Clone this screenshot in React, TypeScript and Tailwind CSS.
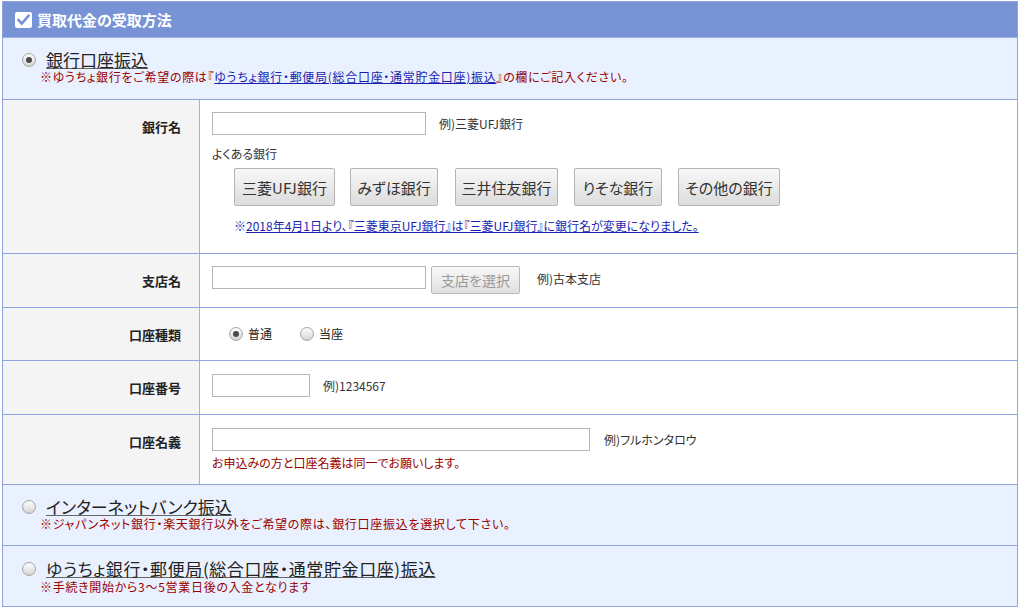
import React from "react";

const FONT = { fontFamily: '"Noto Sans CJK JP", "Noto Sans", sans-serif', fontFeatureSettings: "'palt'" } as React.CSSProperties;

function Radio({ checked }: { checked?: boolean }) {
  return (
    <span className="relative inline-flex w-[14px] h-[14px] shrink-0 rounded-full border border-[#a9a9a9] bg-gradient-to-b from-[#ffffff] to-[#d6d6d6] items-center justify-center shadow-[inset_0_0_1px_rgba(0,0,0,0.15)]">
      {checked && <span className="w-[6px] h-[6px] rounded-full bg-[#4a4a4a]" />}
    </span>
  );
}

function BankButton({ label, cls }: { label: string; cls: string }) {
  return (
    <button className={`${cls} h-[38px] rounded-[2px] border border-[#b4b4b4] bg-gradient-to-b from-[#f8f8f8] to-[#dcdcdc] text-[15px] text-[#333] leading-none`}>
      {label}
    </button>
  );
}

function Label({ text }: { text: string }) {
  return (
    <div className="w-[197px] shrink-0 bg-[#f4f4f4] border-r border-[#9fb2e6] pt-[19px] pr-[18px] text-right text-[13px] leading-[16px] font-bold text-[#222]">
      {text}
    </div>
  );
}

function Title({ text, wide }: { text: string; wide?: boolean }) {
  return (
    <span
      className={`ml-[10px] text-[17px] leading-[18px] text-[#222] underline decoration-[#666] underline-offset-[1px] ${wide ? "tracking-[0.6px]" : ""}`}
    >
      {text}
    </span>
  );
}

export default function App() {
  return (
    <div className="w-[1024px] h-[611px] bg-white pt-[1px]" style={FONT}>
      <div className="ml-[2px] w-[1016px] border border-[#8ea3df] border-b-0">
        {/* Header */}
        <div className="h-[36px] bg-[#7893d5] border-b border-[#9db0e8] flex items-center pl-[12px]">
          <span className="w-[17px] h-[16px] bg-white rounded-[2px] flex items-center justify-center">
            <svg width="13" height="12" viewBox="0 0 13 12">
              <path d="M1.5 6.2 L4.8 9.5 L11.5 1.8" fill="none" stroke="#7893d5" strokeWidth="2.6" strokeLinecap="square" />
            </svg>
          </span>
          <span className="ml-[5px] text-[15px] font-bold text-white leading-none">買取代金の受取方法</span>
        </div>

        {/* Section 1 */}
        <div className="bg-[#eaf1fe] border-b border-[#8ea3df] pt-[12px] pb-[15px]">
          <div className="flex items-center pl-[19px] h-[20px]">
            <Radio checked />
            <Title text="銀行口座振込" />
          </div>
          <div className="pl-[37px] text-[12px] leading-[14px] tracking-[0.7px] text-[#990000]">
            ※ゆうちょ銀行をご希望の際は『
            <span className="text-[#1b1fb0] underline">ゆうちょ銀行・郵便局(総合口座・通常貯金口座)振込</span>
            』の欄にご記入ください。
          </div>
        </div>

        {/* Row 1 */}
        <div className="flex border-b border-[#8ea3df]">
          <Label text="銀行名" />
          <div className="flex-1 pl-[12px] pt-[12px] pb-[20px]">
            <div className="flex items-center">
              <input className="w-[214px] h-[23px] border border-[#b5b5b5] bg-white outline-none" />
              <span className="ml-[13px] text-[12px] text-[#333]">例)三菱UFJ銀行</span>
            </div>
            <div className="mt-[12px] text-[12px] leading-[14px] text-[#333]">よくある銀行</div>
            <div className="mt-[7px] ml-[22px] flex">
              <BankButton label="三菱UFJ銀行" cls="w-[101px]" />
              <BankButton label="みずほ銀行" cls="ml-[15px] w-[88px]" />
              <BankButton label="三井住友銀行" cls="ml-[17px] w-[103px]" />
              <BankButton label="りそな銀行" cls="ml-[16px] w-[88px]" />
              <BankButton label="その他の銀行" cls="ml-[16px] w-[102px]" />
            </div>
            <div className="mt-[13px] ml-[22px] text-[12px] leading-[14px] text-[#1b1fb0]">
              ※<span className="underline">2018年4月1日より、『三菱東京UFJ銀行』は『三菱UFJ銀行』に銀行名が変更になりました。</span>
            </div>
          </div>
        </div>

        {/* Row 2 */}
        <div className="flex border-b border-[#8ea3df]">
          <Label text="支店名" />
          <div className="flex-1 pl-[12px] pt-[12px] pb-[13px] flex items-start">
            <input className="w-[214px] h-[23px] border border-[#b5b5b5] bg-white outline-none" />
            <button className="ml-[5px] w-[89px] h-[28px] rounded-[2px] border border-[#b8b8b8] bg-gradient-to-b from-[#f8f8f8] to-[#e0e0e0] text-[14px] text-[#999] leading-none">支店を選択</button>
            <span className="ml-[17px] mt-[4px] text-[12px] text-[#333]">例)古本支店</span>
          </div>
        </div>

        {/* Row 3 */}
        <div className="flex border-b border-[#8ea3df]">
          <Label text="口座種類" />
          <div className="flex-1 h-[52px] pl-[29px] flex items-center text-[12px] text-[#222]">
            <Radio checked />
            <span className="ml-[5px]">普通</span>
            <span className="ml-[28px] flex"><Radio /></span>
            <span className="ml-[5px]">当座</span>
          </div>
        </div>

        {/* Row 4 */}
        <div className="flex border-b border-[#8ea3df]">
          <Label text="口座番号" />
          <div className="flex-1 pl-[12px] pt-[13px] pb-[17px] flex items-center">
            <input className="w-[98px] h-[23px] border border-[#b5b5b5] bg-white outline-none" />
            <span className="ml-[13px] text-[12px] text-[#333]">例)1234567</span>
          </div>
        </div>

        {/* Row 5 */}
        <div className="flex border-b border-[#8ea3df]">
          <Label text="口座名義" />
          <div className="flex-1 pl-[12px] pt-[13px] pb-[14px]">
            <div className="flex items-center">
              <input className="w-[378px] h-[23px] border border-[#b5b5b5] bg-white outline-none" />
              <span className="ml-[14px] text-[12px] text-[#333]">例)フルホンタロウ</span>
            </div>
            <div className="mt-[5px] text-[12px] leading-[14px] text-[#990000]">お申込みの方と口座名義は同一でお願いします。</div>
          </div>
        </div>

        {/* Section 2 */}
        <div className="bg-[#eaf1fe] border-b border-[#8ea3df] pt-[12px] pb-[14px]">
          <div className="flex items-center pl-[19px] h-[20px]">
            <Radio />
            <Title text="インターネットバンク振込" />
          </div>
          <div className="pl-[37px] text-[12px] leading-[14px] tracking-[0.7px] text-[#990000]">
            ※ジャパンネット銀行・楽天銀行以外をご希望の際は、銀行口座振込を選択して下さい。
          </div>
        </div>

        {/* Section 3 */}
        <div className="bg-[#eaf1fe] border-b border-[#8ea3df] pt-[13px] pb-[12px]">
          <div className="flex items-center pl-[19px] h-[20px]">
            <Radio />
            <Title text="ゆうちょ銀行・郵便局(総合口座・通常貯金口座)振込" wide />
          </div>
          <div className="pl-[37px] mt-[1px] text-[12px] leading-[14px] tracking-[0.7px] text-[#990000]">
            ※手続き開始から3～5営業日後の入金となります
          </div>
        </div>
      </div>
    </div>
  );
}
